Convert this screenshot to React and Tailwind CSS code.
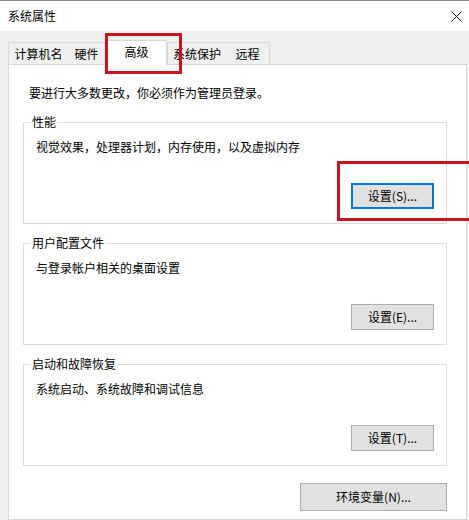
import React from "react";

const tabs = [
  { label: "计算机名", w: "w-[60px]" },
  { label: "硬件", w: "w-[38px]" },
  { label: "高级", w: "w-[61px]", active: true },
  { label: "系统保护", w: "w-[59px]" },
  { label: "远程", w: "w-[44px]" },
];

function Button({ children, focused, className = "" }) {
  return (
    <div
      className={
        "h-[26px] flex items-center justify-center bg-[#e1e1e1] text-black " +
        (focused ? "border-2 border-[#0078d7] " : "border border-[#adadad] ") +
        className
      }
    >
      {children}
    </div>
  );
}

function Group({ title, text, button, focused }) {
  return (
    <fieldset className="border border-[#dcdcdc]">
      <legend className="ml-[7px] px-[1px] leading-[16px]">{title}</legend>
      <div className="pl-[12px] pr-[12px] pt-[9px] pb-[14px]">
        <div className="leading-[16px]">{text}</div>
        <div className="flex justify-end mt-[28px]">
          <Button focused={focused} className="w-[83px]">
            {button}
          </Button>
        </div>
      </div>
    </fieldset>
  );
}

export default function App() {
  return (
    <div
      className="relative w-[469px] h-[520px] overflow-hidden bg-[#f0f0f0] text-[12px] leading-[16px] text-black flex flex-col"
      style={{ fontFamily: '"Noto Sans CJK SC", "Liberation Sans", sans-serif' }}
    >
      {/* title bar */}
      <div className="h-[31px] shrink-0 bg-white border-t border-[#8a8a8a] flex items-center justify-between pl-[8px] pr-[7px]">
        <span className="text-[12px]">系统属性</span>
        <svg width="11" height="11" viewBox="0 0 11 11" className="mt-[1px]">
          <path d="M0.5 0.5 L10.5 10.5 M10.5 0.5 L0.5 10.5" stroke="#111" strokeWidth="1" />
        </svg>
      </div>

      {/* tabs */}
      <div className="h-[33px] shrink-0 flex items-end pl-[8px]">
        {tabs.map((t, i) =>
          t.active ? (
            <div
              key={t.label}
              className={`${t.w} h-[25px] -mb-px relative z-10 bg-white border-x border-t border-[#d9d9d9] flex items-center justify-center pb-[2px]`}
            >
              {t.label}
            </div>
          ) : (
            <div
              key={t.label}
              className={`${t.w} h-[22px] bg-[#f0f0f0] border-t border-[#d9d9d9] flex items-center justify-center ${
                i === 0 || i === 3 ? "border-l" : ""
              } ${i === tabs.length - 1 || i === 1 ? "border-r" : ""}`}
            >
              {t.label}
            </div>
          )
        )}
      </div>

      {/* panel */}
      <div className="ml-[8px] w-[459px] flex-1 bg-white border border-[#d9d9d9] pl-[14px] pr-[19px] pt-[20px]">
        <div className="ml-[6px] leading-[16px]">要进行大多数更改，你必须作为管理员登录。</div>
        <div className="mt-[13px] flex flex-col gap-[11px]">
          <Group
            title="性能"
            text="视觉效果，处理器计划，内存使用，以及虚拟内存"
            button="设置(S)..."
            focused
          />
          <Group title="用户配置文件" text="与登录帐户相关的桌面设置" button="设置(E)..." />
          <Group title="启动和故障恢复" text="系统启动、系统故障和调试信息" button="设置(T)..." />
        </div>
        <div className="flex justify-end mt-[17px]">
          <Button className="w-[147px] h-[28px]">环境变量(N)...</Button>
        </div>
      </div>

      {/* red highlight boxes */}
      <div className="absolute left-[105px] top-[33px] w-[77px] h-[41px] border-[3px] border-[#c8141c] z-20" />
      <div className="absolute left-[337px] top-[161px] w-[140px] h-[60px] border-[3px] border-[#c8141c] z-20" />
    </div>
  );
}
